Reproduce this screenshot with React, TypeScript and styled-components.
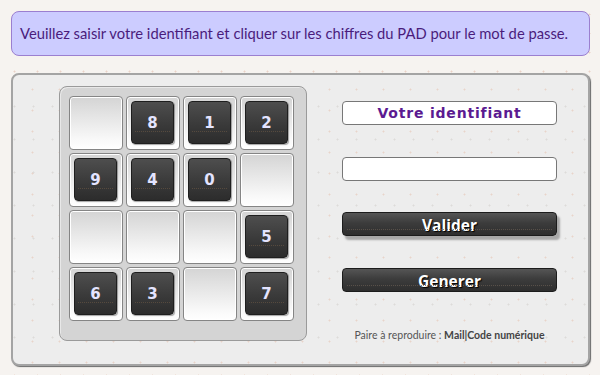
import React from "react";
import styled, { createGlobalStyle } from "styled-components";

const Global = createGlobalStyle`
  html, body { margin: 0; padding: 0; }
  body {
    width: 600px;
    height: 375px;
    overflow: hidden;
    background-color: #f6f3f0;
    background-image:
      radial-gradient(circle, rgba(220,170,150,0.45) 0.8px, transparent 1.2px),
      radial-gradient(circle, rgba(200,190,180,0.35) 0.8px, transparent 1.2px);
    background-size: 23px 19px, 31px 27px;
    background-position: 3px 5px, 14px 12px;
    font-family: "Open Sans", "Liberation Sans", sans-serif;
  }
`;

const Page = styled.div`
  display: flex;
  flex-direction: column;
  gap: 17px;
  padding: 11px 0 0 11px;
  width: 579px;
`;

const Banner = styled.div`
  box-sizing: border-box;
  height: 45px;
  display: flex;
  align-items: center;
  padding: 0 0 1px 8px;
  background: #ccccff;
  border: 1px solid #9b7fd0;
  border-radius: 8px;
  color: #4a1c7c;
  font-family: Lato, "Open Sans", sans-serif;
  font-size: 14.75px;
  white-space: nowrap;
`;

const Panel = styled.div`
  box-sizing: border-box;
  height: 293px;
  display: flex;
  align-items: flex-start;
  padding: 11px 0 0 46px;
  border: 2px solid #a4a4a4;
  border-radius: 8px;
  box-shadow: 1px 1px 1px #6a6a6a;
  background-color: #ededed;
  background-image:
    radial-gradient(circle, rgba(225,175,150,0.4) 0.8px, transparent 1.2px),
    radial-gradient(circle, rgba(190,185,180,0.35) 0.8px, transparent 1.2px);
  background-size: 27px 21px, 19px 33px;
  background-position: 6px 4px, 11px 15px;
`;

const Pad = styled.div`
  box-sizing: border-box;
  width: 248px;
  height: 255px;
  padding: 9px 12px 19px 9px;
  display: grid;
  grid-template-columns: repeat(4, 54px);
  grid-template-rows: repeat(4, 54px);
  gap: 3px;
  background: #d4d4d4;
  border: 1px solid #9a9a9a;
  border-radius: 8px;
  box-shadow: inset 1px 1px 0 #e8e8e8;
`;

const Cell = styled.div`
  box-sizing: border-box;
  width: 54px;
  height: 54px;
  padding: 4px;
  border: 1px solid #858585;
  border-radius: 4px;
  background: linear-gradient(#d4d4d4, #f8f8f8 80%, #ffffff);
  box-shadow: inset 0 0 0 1px #ffffff;
`;

const Key = styled.div`
  position: relative;
  box-sizing: border-box;
  width: 43px;
  height: 43px;
  display: flex;
  align-items: center;
  justify-content: center;
  border: 1px solid #1e1e1e;
  border-radius: 4px;
  background: linear-gradient(#4e4e4e, #3a3a3a 55%, #2c2c2c);
  box-shadow: 1px 1px 1px rgba(0,0,0,0.35);
  color: #e4e4ff;
  font-family: "DejaVu Sans", Verdana, sans-serif;
  font-weight: bold;
  font-size: 15px;
  &::after {
    content: "";
    position: absolute;
    left: 3px;
    right: 3px;
    top: 29px;
    border-top: 1px dotted rgba(95, 80, 65, 0.8);
  }
`;

const Side = styled.div`
  width: 215px;
  margin-left: 35px;
  padding-top: 15px;
  display: flex;
  flex-direction: column;
`;

const LabelBox = styled.div`
  box-sizing: border-box;
  height: 24px;
  display: flex;
  align-items: center;
  justify-content: center;
  background: #fff;
  border: 1px solid #777;
  border-radius: 4px;
  color: #5b1a91;
  font-family: "DejaVu Sans", Verdana, sans-serif;
  font-weight: bold;
  font-size: 14px;
  letter-spacing: 0.8px;
`;

const Input = styled.input`
  box-sizing: border-box;
  height: 24px;
  margin-top: 32px;
  background: #fff;
  border: 1px solid #777;
  border-radius: 4px;
  outline: none;
  padding: 0 6px;
`;

const Button = styled.button<{ $shadow?: boolean }>`
  position: relative;
  box-sizing: border-box;
  height: 24px;
  margin-top: ${(p) => (p.$shadow ? "31px" : "32px")};
  padding: 1px 0 0;
  display: flex;
  align-items: center;
  justify-content: center;
  border: 1px solid #1c1c1c;
  border-radius: 4px;
  background: linear-gradient(#555, #3c3c3c 45%, #2e2e2e);
  box-shadow: ${(p) => (p.$shadow ? "3px 4px 2px #a8a8a8" : "none")};
  color: #fff;
  font-family: "Open Sans", sans-serif;
  font-weight: bold;
  font-size: 15.5px;
  text-shadow: 1px 1px 1px #000;
  cursor: pointer;
  &::after {
    content: "";
    position: absolute;
    left: 4px;
    right: 4px;
    bottom: 5px;
    border-top: 1px dotted rgba(100, 90, 80, 0.75);
  }
`;

const Note = styled.div`
  margin-top: 37px;
  text-align: center;
  color: #555;
  font-family: Lato, "Open Sans", sans-serif;
  font-size: 10.5px;
  white-space: nowrap;
  b { font-weight: bold; color: #444; }
`;

const layout: (string | null)[] = [
  null, "8", "1", "2",
  "9", "4", "0", null,
  null, null, null, "5",
  "6", "3", null, "7",
];

export default function App() {
  return (
    <>
      <Global />
      <Page>
        <Banner>
          Veuillez saisir votre identifiant et cliquer sur les chiffres du PAD pour le mot de passe.
        </Banner>
        <Panel>
          <Pad>
            {layout.map((d, i) => (
              <Cell key={i}>{d !== null && <Key>{d}</Key>}</Cell>
            ))}
          </Pad>
          <Side>
            <LabelBox>Votre identifiant</LabelBox>
            <Input type="password" />
            <Button $shadow>Valider</Button>
            <Button>Generer</Button>
            <Note>
              Paire à reproduire : <b>Mail|Code numérique</b>
            </Note>
          </Side>
        </Panel>
      </Page>
    </>
  );
}
